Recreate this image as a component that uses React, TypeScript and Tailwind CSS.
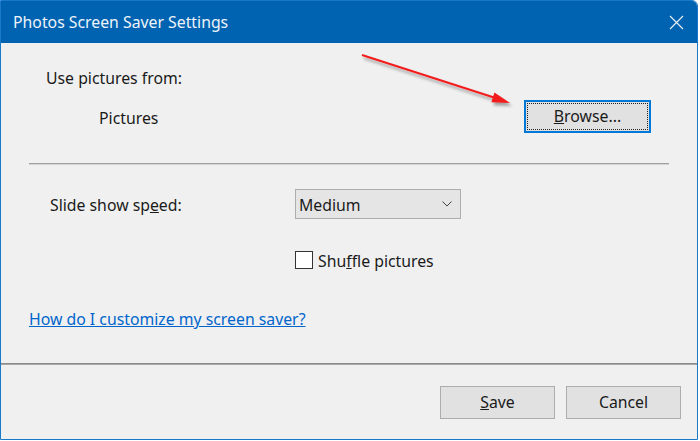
import React from "react";

const font = { fontFamily: '"Noto Sans", "Segoe UI", Arial, sans-serif' };

export default function App() {
  return (
    <div className="relative w-[700px] h-[441px] bg-white overflow-hidden [font-variant-ligatures:none]" style={font}>
      <div className="flex flex-col w-[698px] h-[440px] border border-[#1a78c9] rounded-tr-[6px] overflow-hidden">
        {/* Title bar */}
        <div className="flex items-center justify-between h-[42px] shrink-0 bg-[#0063b1] pl-[12px] pr-[13px]">
          <span className="text-[15.8px] text-[#eef3f9] leading-none mt-[2px]">Photos Screen Saver Settings</span>
          <svg width="15" height="15" viewBox="0 0 15 15" className="mt-[1px]">
            <path d="M1 1 L14 14 M14 1 L1 14" stroke="#e6eef7" strokeWidth="1.2" fill="none" />
          </svg>
        </div>

        {/* Body */}
        <div className="flex flex-col flex-1 bg-[#f0f0f0] text-[15.8px] text-[#1a1a1a]">
          <div className="h-[20px] mt-[25px] pl-[45px] leading-[20px]">Use pictures from:</div>

          <div className="flex items-center h-[33px] mt-[12px] pl-[98px] pr-[46px]">
            <span className="leading-[20px] mt-[2px]">Pictures</span>
            <button className="relative ml-auto w-[127px] h-[33px] bg-[#e1e1e1] border-2 border-[#0078d7] text-[15.8px] text-[#1a1a1a] leading-none">
              <span className="absolute inset-[1px] border border-dotted border-[#222]"></span>
              <span className="underline">B</span>rowse...
            </button>
          </div>

          <div className="mx-[28px] mt-[30px] h-[2px] border-t border-[#a0a0a0] border-b border-b-[#d4d4d4]"></div>

          <div className="flex items-center h-[30px] mt-[24px]">
            <span className="w-[294px] pl-[49px] leading-[20px] mt-[2px]">
              Slide show sp<span className="underline">e</span>ed:
            </span>
            <div className="flex items-center justify-between w-[166px] h-[30px] bg-[#e5e5e5] border border-[#adadad] pl-[3px] pr-[8px]">
              <span className="leading-[20px] mt-[1px]">Medium</span>
              <svg width="10" height="6" viewBox="0 0 10 6">
                <path d="M0.5 0.5 L5 5 L9.5 0.5" stroke="#444" strokeWidth="1" fill="none" />
              </svg>
            </div>
          </div>

          <div className="flex items-center h-[18px] mt-[32px] pl-[294px]">
            <div className="w-[18px] h-[18px] bg-white border border-[#333]"></div>
            <span className="ml-[5px] leading-[20px] mt-[1px]">
              Shu<span className="underline">f</span>fle pictures
            </span>
          </div>

          <div className="h-[20px] mt-[40px] pl-[28px] leading-[20px]">
            <span className="text-[#0066cc] underline">How do I customize my screen saver?</span>
          </div>

          <div className="mt-auto">
            <div className="h-[2px] border-t border-[#8a8a8a] border-b border-b-[#a8a8a8]"></div>
            <div className="flex justify-end gap-[11px] h-[74px] pt-[21px] pr-[16px]">
              <button className="w-[115px] h-[33px] bg-[#e1e1e1] border border-[#adadad] text-[15.8px] text-[#1a1a1a] leading-none">
                <span className="underline">S</span>ave
              </button>
              <button className="w-[115px] h-[33px] bg-[#e1e1e1] border border-[#adadad] text-[15.8px] text-[#1a1a1a] leading-none">
                Cancel
              </button>
            </div>
          </div>
        </div>
      </div>

      {/* Red annotation arrow */}
      <svg className="absolute left-0 top-0 pointer-events-none" width="700" height="441">
        <defs>
          <filter id="sh" x="-10%" y="-50%" width="130%" height="250%">
            <feDropShadow dx="2" dy="3" stdDeviation="1.5" floodColor="#000" floodOpacity="0.35" />
          </filter>
        </defs>
        <g filter="url(#sh)">
          <line x1="362" y1="55" x2="494" y2="97.5" stroke="#f21c1c" strokeWidth="2" />
          <polygon points="510,103 494.4,92.6 491.4,102.2" fill="#f21c1c" />
        </g>
      </svg>
    </div>
  );
}
